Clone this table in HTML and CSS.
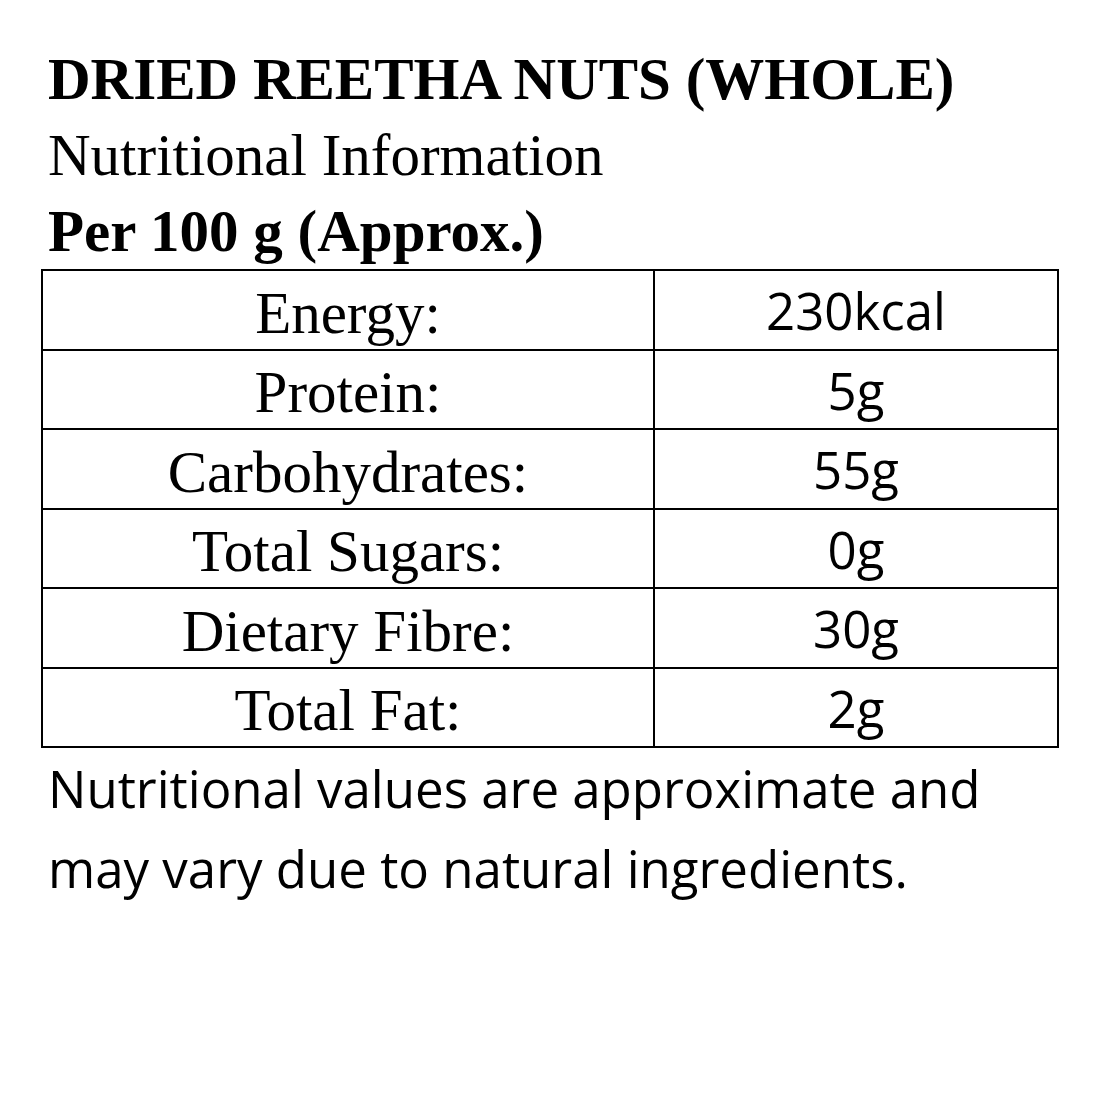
FILE: index.html
```html
<!DOCTYPE html>
<html lang="en">
<head>
<meta charset="utf-8">
<title>Dried Reetha Nuts (Whole) - Nutritional Information</title>
<link rel="stylesheet" href="styles.css">
</head>
<body>
<main class="label">
  <header class="head">
    <h1 class="title">DRIED REETHA NUTS (WHOLE)</h1>
    <p class="subtitle">Nutritional Information</p>
    <p class="per">Per 100 g (Approx.)</p>
  </header>
  <div class="facts">
    <div class="cell name">Energy:</div><div class="cell value">230kcal</div>
    <div class="cell name">Protein:</div><div class="cell value">5g</div>
    <div class="cell name">Carbohydrates:</div><div class="cell value">55g</div>
    <div class="cell name">Total Sugars:</div><div class="cell value">0g</div>
    <div class="cell name">Dietary Fibre:</div><div class="cell value">30g</div>
    <div class="cell name">Total Fat:</div><div class="cell value">2g</div>
  </div>
  <p class="note">Nutritional values are approximate and<br>may vary due to natural ingredients.</p>
</main>
</body>
</html>
```

FILE: styles.css
```css
html, body {
  margin: 0;
  padding: 0;
  background: #ffffff;
  color: #000000;
}

.label {
  padding-top: 41px;
}

.head {
  padding-left: 48px;
  font-family: "Liberation Serif", "Times New Roman", serif;
  font-size: 59px;
  line-height: 76px;
}

.title,
.subtitle,
.per {
  margin: 0;
  font-size: 59px;
  line-height: 76px;
  white-space: nowrap;
}

.title {
  font-weight: bold;
}

.subtitle {
  font-weight: normal;
}

.per {
  font-weight: bold;
}

.facts {
  margin-left: 41px;
  width: 1018px;
  box-sizing: border-box;
  display: grid;
  grid-template-columns: 612px 404px;
  grid-template-rows: repeat(6, 79.5px);
  border-top: 2px solid #000;
  border-left: 2px solid #000;
}

.cell {
  box-sizing: border-box;
  border-right: 2px solid #000;
  border-bottom: 2px solid #000;
  text-align: center;
  white-space: nowrap;
}

.name {
  font-family: "Liberation Serif", "Times New Roman", serif;
  font-size: 59px;
  line-height: 1;
  padding-top: 12.5px;
}

.value {
  font-family: "Open Sans", "Liberation Sans", sans-serif;
  font-size: 51px;
  font-weight: 500;
  line-height: 1;
  padding-top: 14px;
}

.note {
  margin: 0;
  padding-left: 48px;
  font-family: "Open Sans", "Liberation Sans", sans-serif;
  font-size: 51px;
  font-weight: 500;
  line-height: 80px;
  white-space: nowrap;
}
```
